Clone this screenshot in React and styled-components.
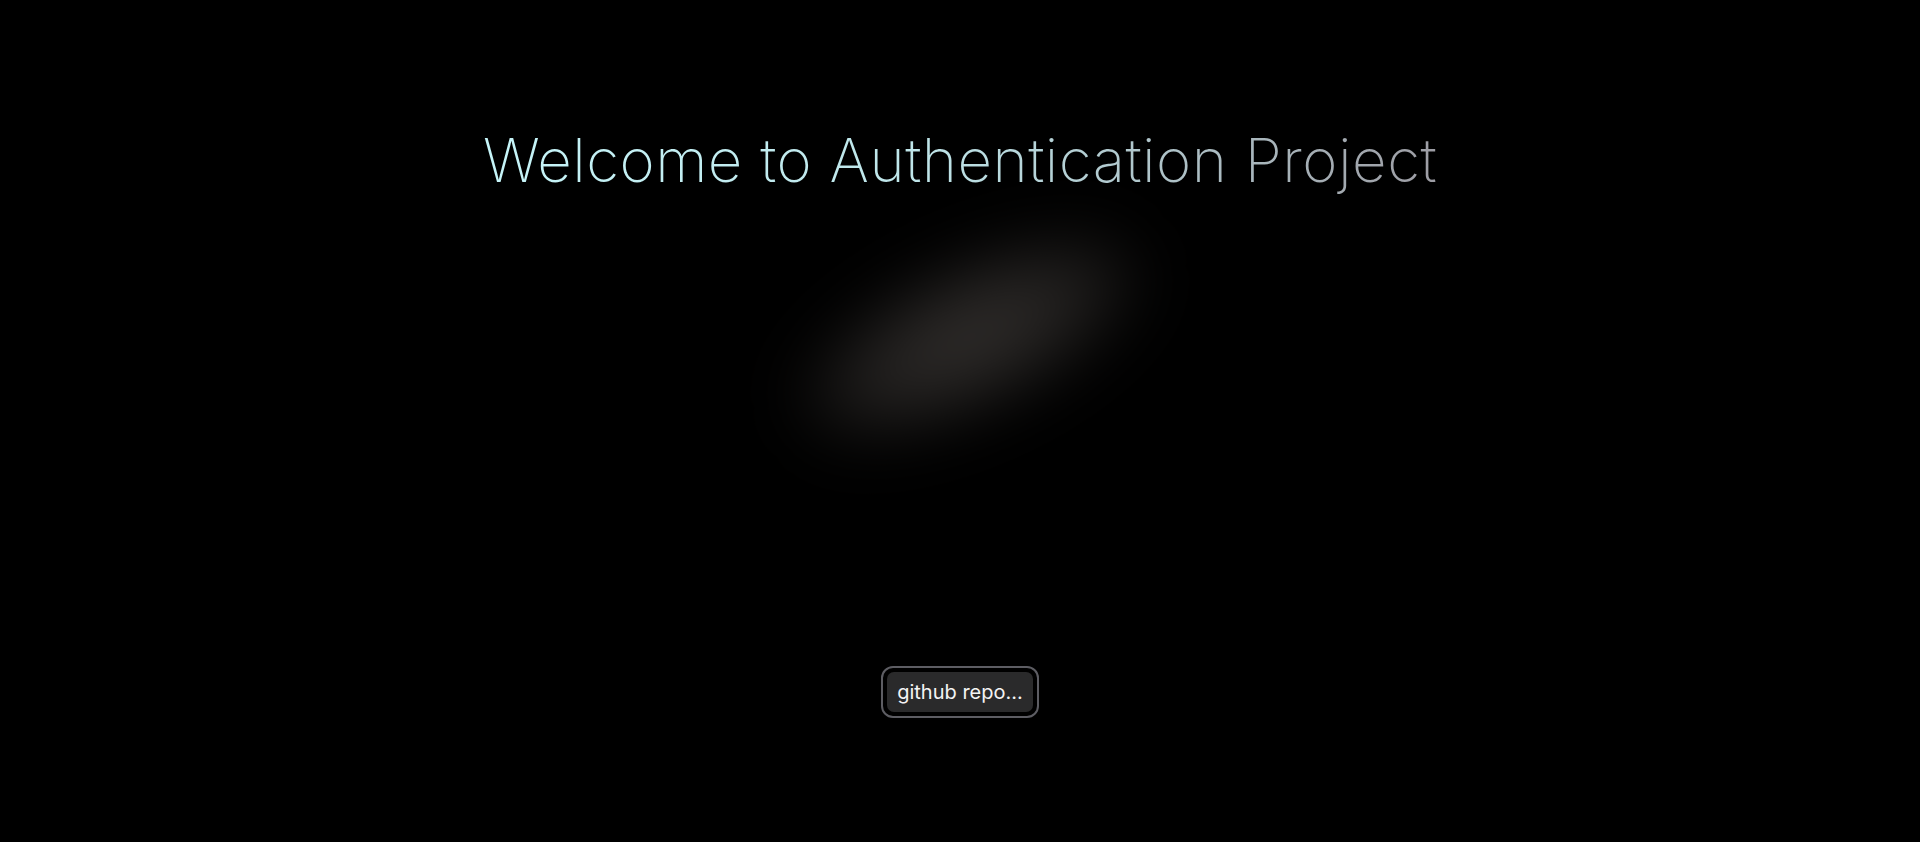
import React from 'react';
import styled, { createGlobalStyle } from 'styled-components';

const GlobalStyle = createGlobalStyle`
  html, body {
    margin: 0;
    padding: 0;
    background: #000;
  }
  body {
    font-family: Inter, "Noto Sans", sans-serif;
  }
`;

const Page = styled.main`
  position: relative;
  min-height: 100vh;
  height: 842px;
  overflow: hidden;
  background: #000;
  display: flex;
  flex-direction: column;
  align-items: center;
`;

const Title = styled.h1`
  position: relative;
  z-index: 1;
  margin: 118px 0 0;
  font-family: Inter, sans-serif;
  font-weight: 200;
  font-size: 60px;
  line-height: 84px;
  letter-spacing: 0.5px;
  background: linear-gradient(90deg, #c6f5f9 0%, #bfe6ea 45%, #9d9da4 100%);
  -webkit-background-clip: text;
  background-clip: text;
  color: transparent;
`;

const Glow = styled.div`
  position: absolute;
  left: 780px;
  top: 262px;
  width: 380px;
  height: 150px;
  border-radius: 50%;
  background: radial-gradient(ellipse at center, #33302e 0%, #211f1e 45%, rgba(20, 19, 18, 0) 78%);
  filter: blur(32px);
  transform: rotate(-25deg);
  pointer-events: none;
`;

const Spacer = styled.div`
  flex: 0 0 464px;
`;

const Ring = styled.div`
  position: relative;
  z-index: 1;
  padding: 4px;
  border: 2px solid #5d5d63;
  border-radius: 12px;
  display: flex;
`;

const RepoButton = styled.a`
  display: flex;
  align-items: center;
  justify-content: center;
  width: 146px;
  height: 40px;
  border-radius: 7px;
  background: #2a2a2b;
  color: #f4f4f4;
  font-family: Inter, sans-serif;
  font-size: 20px;
  font-weight: 400;
  text-decoration: none;
  cursor: pointer;
`;

export default function App() {
  return (
    <>
      <GlobalStyle />
      <Page>
        <Glow />
        <Title>Welcome to Authentication Project</Title>
        <Spacer />
        <Ring>
          <RepoButton href="#">github repo...</RepoButton>
        </Ring>
      </Page>
    </>
  );
}
